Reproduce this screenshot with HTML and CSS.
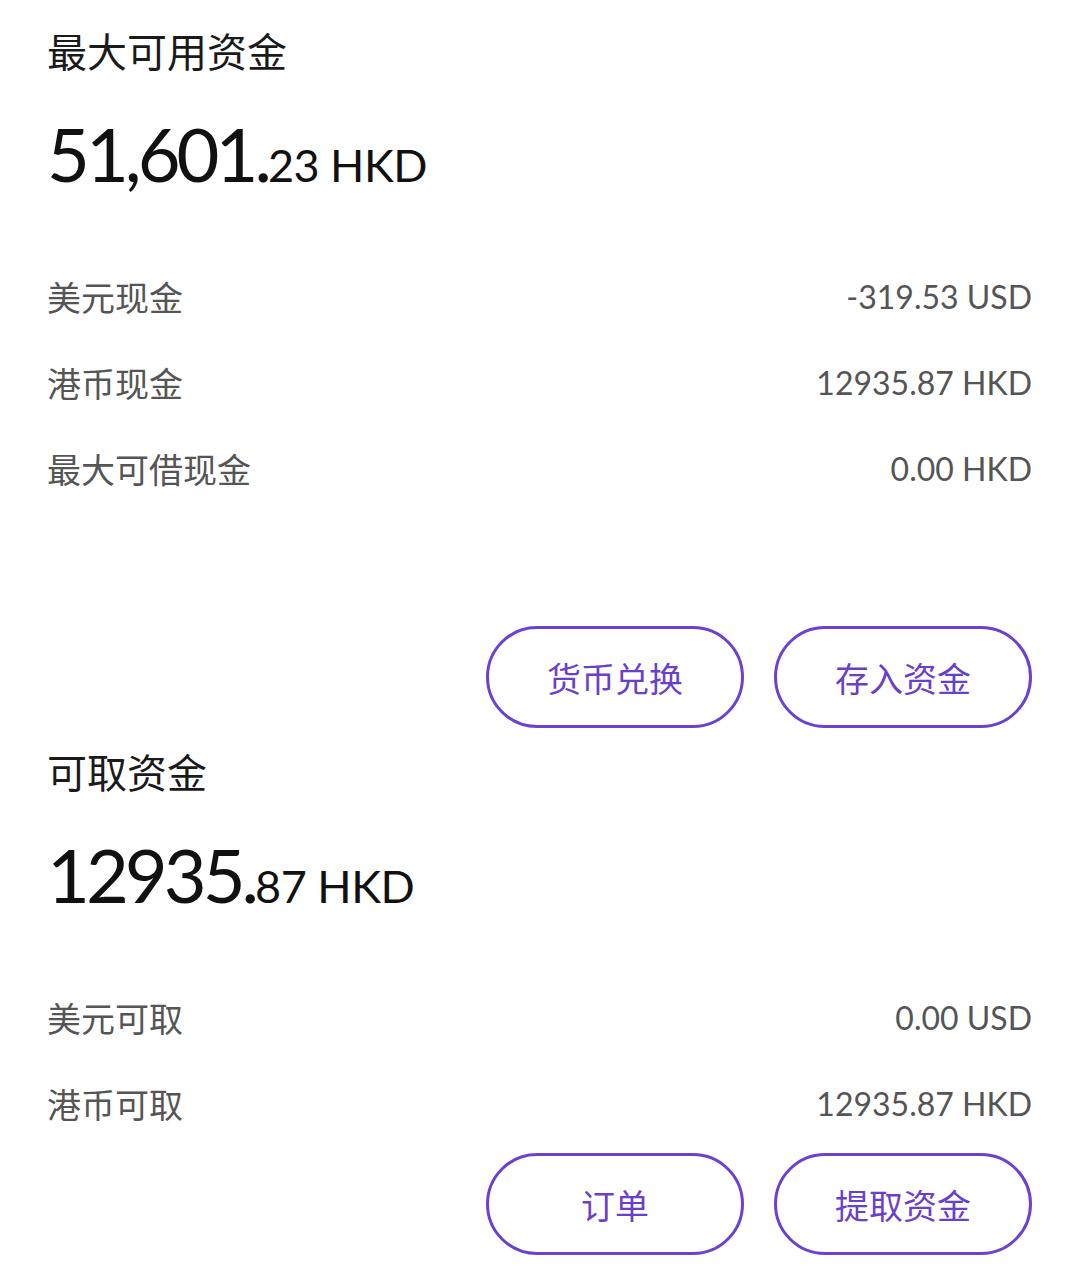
FILE: index.html
```html
<!DOCTYPE html>
<html lang="zh-CN">
<head>
<meta charset="utf-8">
<link rel="stylesheet" href="styles.css">
</head>
<body>
<div class="page">
  <section class="block">
    <div class="title">最大可用资金</div>
    <div class="amount"><span class="int">51,601.</span><span class="dec">23 HKD</span></div>
    <div class="rows">
      <div class="row"><span class="label">美元现金</span><span class="value">-319.53 USD</span></div>
      <div class="row"><span class="label">港币现金</span><span class="value">12935.87 HKD</span></div>
      <div class="row"><span class="label">最大可借现金</span><span class="value">0.00 HKD</span></div>
    </div>
    <div class="actions first">
      <button class="btn">货币兑换</button>
      <button class="btn">存入资金</button>
    </div>
  </section>
  <section class="block">
    <div class="title">可取资金</div>
    <div class="amount"><span class="int">12935.</span><span class="dec">87 HKD</span></div>
    <div class="rows">
      <div class="row"><span class="label">美元可取</span><span class="value">0.00 USD</span></div>
      <div class="row"><span class="label">港币可取</span><span class="value">12935.87 HKD</span></div>
    </div>
    <div class="actions second">
      <button class="btn">订单</button>
      <button class="btn">提取资金</button>
    </div>
  </section>
</div>
</body>
</html>
```
FILE: styles.css
```css
html, body {
  margin: 0;
  padding: 0;
  background: #ffffff;
}
.page {
  padding: 25px 48px 0 47px;
  font-family: "Lato", "Noto Sans CJK SC", sans-serif;
}
.title {
  font-family: "Noto Sans CJK SC", sans-serif;
  font-size: 40px;
  line-height: 50px;
  height: 50px;
  color: #1a1a1a;
}
.amount {
  height: 178px;
  line-height: 158px;
  color: #111111;
  white-space: nowrap;
}
.int {
  font-size: 74px;
  letter-spacing: -4px;
}
.dec {
  font-size: 45px;
  letter-spacing: -0.5px;
}
.row {
  height: 86px;
  display: flex;
  justify-content: space-between;
  align-items: center;
  color: #555555;
}
.label {
  font-family: "Noto Sans CJK SC", sans-serif;
  font-size: 34px;
}
.value {
  font-family: "Lato", sans-serif;
  font-size: 32px;
}
.actions {
  display: flex;
  justify-content: flex-end;
  gap: 30px;
}
.actions.first {
  margin-top: 115px;
  margin-bottom: 18px;
}
.actions.second {
  margin-top: 7px;
}
.btn {
  width: 258px;
  height: 102px;
  border: 3px solid #6b41d2;
  border-radius: 51px;
  background: #ffffff;
  color: #6a3fc9;
  font-family: "Noto Sans CJK SC", sans-serif;
  font-size: 34px;
  padding: 0;
  box-sizing: border-box;
}
```
